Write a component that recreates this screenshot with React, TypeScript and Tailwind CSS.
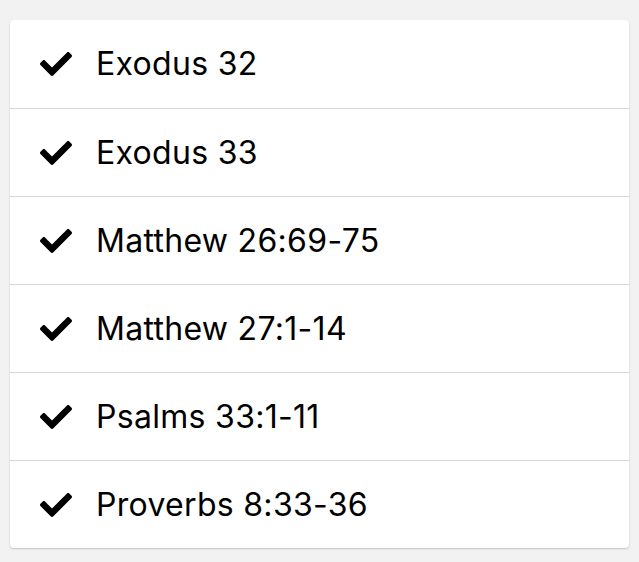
import { FaCheck } from "react-icons/fa";

const readings = [
  "Exodus 32",
  "Exodus 33",
  "Matthew 26:69-75",
  "Matthew 27:1-14",
  "Psalms 33:1-11",
  "Proverbs 8:33-36",
];

export default function App() {
  return (
    <div className="min-h-[562px] w-full bg-[#f2f2f2] px-[10px] pt-[20px] font-['Inter',sans-serif]">
      <div className="overflow-hidden rounded-[4px] bg-white shadow-[0_1px_2px_rgba(0,0,0,0.2)]">
        {readings.map((r, i) => (
          <div
            key={r}
            className={`flex h-[88px] items-center ${i > 0 ? "border-t border-[#d6d6d6]" : ""}`}
          >
            <FaCheck className="ml-[30px] h-[32px] w-[32px] text-black" />
            <span className="ml-[24px] text-[32px] leading-none tracking-[0.3px] text-black">{r}</span>
          </div>
        ))}
      </div>
    </div>
  );
}
